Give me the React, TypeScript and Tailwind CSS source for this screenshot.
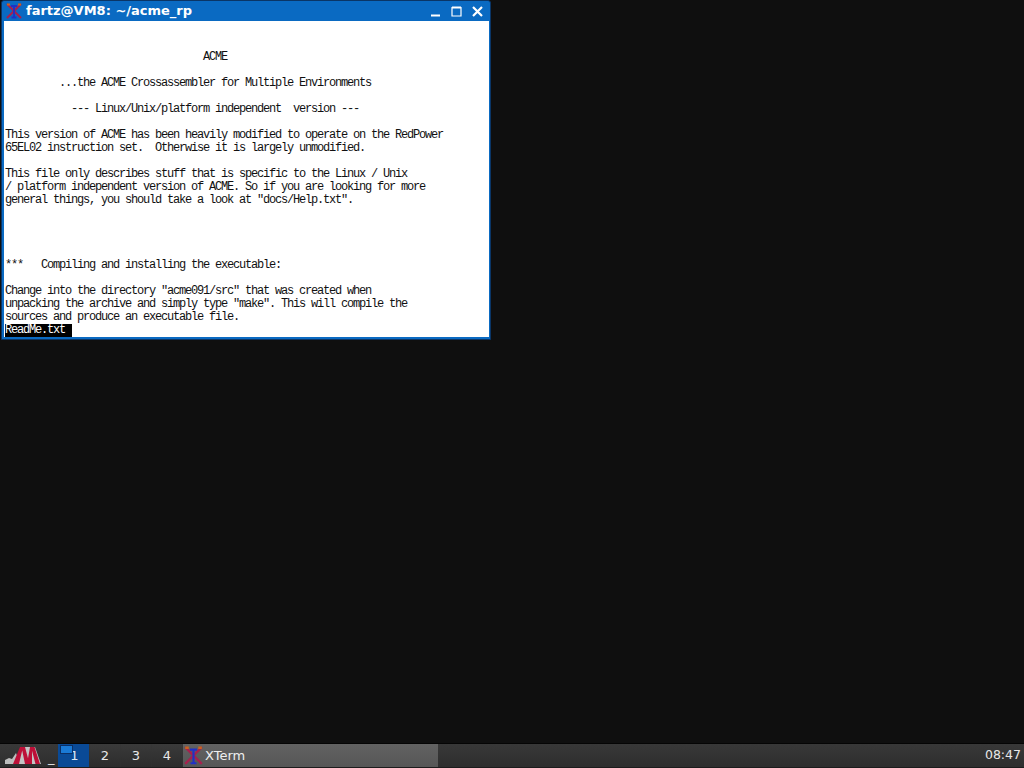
const lines = [
  "",
  "",
  "                                 ACME",
  "",
  "         ...the ACME Crossassembler for Multiple Environments",
  "",
  "           --- Linux/Unix/platform independent  version ---",
  "",
  "This version of ACME has been heavily modified to operate on the RedPower",
  "65EL02 instruction set.  Otherwise it is largely unmodified.",
  "",
  "This file only describes stuff that is specific to the Linux / Unix",
  "/ platform independent version of ACME. So if you are looking for more",
  "general things, you should take a look at \"docs/Help.txt\".",
  "",
  "",
  "",
  "",
  "***   Compiling and installing the executable:",
  "",
  "Change into the directory \"acme091/src\" that was created when",
  "unpacking the archive and simply type \"make\". This will compile the",
  "sources and produce an executable file.",
];

function XIcon({ size }: { size: number }) {
  return (
    <svg width={size} height={size} viewBox="0 0 16 16" className="shrink-0">
      <path d="M1 1 C4 4 6 6 8 8 C10 10 12 12 15 15 M15 1 C12 4 10 6 8 8 C6 10 4 12 1 15" stroke="#a8204e" strokeWidth="2" fill="none" />
      <path d="M1 1.5 H4 M12 1.5 H15" stroke="#c8641e" strokeWidth="2" fill="none" />
      <path d="M5 3 H11 M8 3 V14 M5.5 14.5 H10.5" stroke="#2030c8" strokeWidth="1.8" fill="none" />
    </svg>
  );
}

function Logo() {
  return (
    <svg width="36" height="19" viewBox="0 0 36 19" className="mb-[2px]">
      <path d="M0 18 V14 L4 12 L7 13 L11 7 L15 18 Z" fill="#bdbdbd" />
      <path d="M12 18 L17 1 H30 L36 18 Z" fill="#c4c4c4" />
      <path d="M8 18 L15 1 H18 L14 18 Z M16.5 1 H20 L24.5 18 H20 Z M22 18 L25 1 H27 L27 18 Z M26 1 H29.5 L35 18 H30.5 Z" fill="#bd1038" />
    </svg>
  );
}

function Num({ n }: { n: string }) {
  return (
    <div className="w-[30px] mr-px flex items-center justify-center bg-gradient-to-b from-[#3a3a3a] to-[#2c2c2c] text-[13px] text-[#e8e8e8]">
      {n}
    </div>
  );
}

export default function App() {
  return (
    <div
      className="w-[1024px] h-[768px] bg-[#0f0f0f] flex flex-col overflow-hidden"
      style={{ fontFamily: '"DejaVu Sans", sans-serif' }}
    >
      <div className="flex-1 min-h-0">
        <div className="ml-[1px] w-[490px] h-[340px] bg-[#0a6ac2] border border-[#0a3566] rounded-t-[3px] pl-[2px] pr-[1px] pb-[2px] flex flex-col">
          <div className="h-[20px] shrink-0 flex items-center pl-[2px] pr-[6px] text-white">
            <XIcon size={16} />
            <span className="ml-[4px] text-[13px] font-bold">fartz@VM8: ~/acme_rp</span>
            <div className="ml-auto flex items-center gap-[10px]">
              <svg width="11" height="11" viewBox="0 0 11 11"><path d="M1 9.5 H10" stroke="#fff" strokeWidth="2" /></svg>
              <svg width="11" height="11" viewBox="0 0 11 11"><path d="M1 1.5 H10 V10 H1 Z" stroke="#fff" strokeWidth="1.2" fill="none" /><path d="M1 1.5 H10" stroke="#fff" strokeWidth="2" /></svg>
              <svg width="11" height="11" viewBox="0 0 11 11"><path d="M1 1 L10 10 M10 1 L1 10" stroke="#fff" strokeWidth="2.2" /></svg>
            </div>
          </div>
          <div className="flex-1 bg-white pl-[1px] pt-[4px] flex flex-col">
            {lines.map((l, i) => (
              <div
                key={i}
                className="h-[13px] leading-[13px] whitespace-pre text-[12px] tracking-[-1.2px] text-[#111]"
                style={{ fontFamily: '"Liberation Mono", monospace' }}
              >
                {l}
              </div>
            ))}
            <div
              className="h-[13px] leading-[13px] w-[67px] whitespace-pre text-[12px] tracking-[-1.2px] bg-black text-white"
              style={{ fontFamily: '"Liberation Mono", monospace' }}
            >
              ReadMe.txt
            </div>
          </div>
        </div>
      </div>
      <div className="h-[25px] shrink-0 flex border-t border-[#050505] border-b border-b-[#1c1c1c] bg-gradient-to-b from-[#383838] to-[#2e2e2e] text-[13px] text-[#e8e8e8]">
        <div className="w-[46px] pl-[5px] flex items-end"><Logo /></div>
        <div className="relative w-[43px] mr-px flex items-end">
          <span className="ml-[2px] mb-[1px] text-[#e8e8e8] leading-[16px]">_</span>
          <div className="absolute left-[12px] top-0 bottom-0 w-[31px] bg-[#0a4a96] flex items-center justify-center text-[#dfe8f2] pl-[2px]">1</div>
          <div className="absolute left-[14px] top-[1px] w-[13px] h-[9px] bg-[#1a7ad6] border border-[#0b2f66]" />
        </div>
        <Num n="2" />
        <Num n="3" />
        <Num n="4" />
        <div className="w-[255px] bg-gradient-to-b from-[#626262] to-[#565656] flex items-center pl-[1px] gap-[2px] text-[13px]">
          <XIcon size={19} />
          <span className="text-[#efefef]">XTerm</span>
        </div>
        <div className="ml-auto pr-[3px] flex items-center text-[12.5px] text-[#e8e8e8]">08:47</div>
      </div>
    </div>
  );
}
